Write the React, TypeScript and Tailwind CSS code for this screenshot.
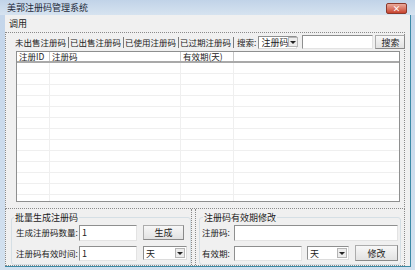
import React from 'react';

const font = { fontFamily: '"Noto Sans CJK SC", "Noto Sans", sans-serif' };

const TextBox: React.FC<{ value?: string; className?: string }> = ({ value = '', className = '' }) => (
  <div
    className={`shrink-0 bg-white border border-t-[#8e8f8f] border-l-[#8e8f8f] border-r-[#e3e3e3] border-b-[#e3e3e3] flex items-center pl-[2px] text-[9px] leading-none text-[#222] ${className}`}
  >
    {value}
  </div>
);

const Combo: React.FC<{ value: string; className?: string }> = ({ value, className = '' }) => (
  <div
    className={`shrink-0 bg-white border border-t-[#8e8f8f] border-l-[#8e8f8f] border-r-[#dcdcdc] border-b-[#dcdcdc] flex items-center justify-between pl-[2px] pr-[1px] text-[9px] leading-none text-[#222] whitespace-nowrap ${className}`}
  >
    <span>{value}</span>
    <span className="w-[10px] h-[10px] shrink-0 bg-[#ececec] border border-[#b5b5b5] flex items-center justify-center">
      <span className="w-0 h-0 border-l-[3px] border-r-[3px] border-t-[3px] border-l-transparent border-r-transparent border-t-[#222]" />
    </span>
  </div>
);

const Button: React.FC<{ label: string; className?: string }> = ({ label, className = '' }) => (
  <div
    className={`shrink-0 border border-[#acacac] border-b-[#8a8a8a] border-r-[#8a8a8a] bg-gradient-to-b from-[#f7f7f7] to-[#e2e2e2] flex items-center justify-center text-[9px] leading-none text-[#222] whitespace-nowrap ${className}`}
  >
    {label}
  </div>
);

const tabs = ['未出售注册码', '已出售注册码', '已使用注册码', '已过期注册码'];
const rows = Array.from({ length: 13 });

export default function App() {
  return (
    <div
      className="w-[415px] h-[270px] bg-gradient-to-b from-[#c3d5ea] to-[#d3e1ef] flex flex-col overflow-hidden text-[#222]"
      style={font}
    >
      {/* Title bar */}
      <div className="h-[16px] flex items-center justify-between pl-[7px] pr-[8px] bg-gradient-to-b from-[#c1d3e8] to-[#d6e3f0]">
        <span className="text-[9px] leading-none text-[#1e2a3a] whitespace-nowrap">美郭注册码管理系统</span>
        <div className="w-[21px] h-[11px] mt-[2px] rounded-[2px] bg-gradient-to-b from-[#e9a99b] to-[#c7422e] border border-[#8c3a2c] flex items-center justify-center text-white text-[8px] leading-none font-bold">
          ×
        </div>
      </div>

      {/* Client area */}
      <div className="flex-1 ml-[5px] mr-[4px] mb-[3px] bg-[#f0f0f0] border-r border-b border-[#3b8aa6] flex flex-col">
        {/* Menu */}
        <div className="h-[17px] flex items-center pl-[4px] text-[9px] leading-none">调用</div>

        {/* Tab section */}
        <div className="h-[177px] mr-[5px] border border-dotted border-[#8a8a8a] flex flex-col">
          <div className="h-[18px] flex items-center pl-[9px] text-[8.5px] leading-none whitespace-nowrap">
            {tabs.map((t) => (
              <React.Fragment key={t}>
                <span className="shrink-0">{t}</span>
                <span className="shrink-0 mx-[1.5px] w-px h-[11px] bg-[#7a7a7a]" />
              </React.Fragment>
            ))}
            <span className="shrink-0 ml-[2px]">搜索:</span>
            <Combo value="注册码" className="w-[39px] h-[13px] ml-[2px]" />
            <TextBox className="w-[71px] h-[14px] ml-[5px]" />
            <Button label="搜索" className="w-[30px] h-[14px] ml-[2px]" />
          </div>

          {/* List view */}
          <div className="ml-[10px] mr-[4px] h-[151px] bg-white border border-[#8e8f8f] flex flex-col overflow-hidden">
            <div className="h-[11px] shrink-0 flex border-b-2 border-[#a9a9a9] text-[8.5px] leading-none whitespace-nowrap">
              <div className="w-[33px] border-r border-[#c8c8c8] flex items-center pl-[2px]">注册ID</div>
              <div className="w-[131px] border-r border-[#c8c8c8] flex items-center pl-[2px]">注册码</div>
              <div className="w-[53px] border-r border-[#c8c8c8] flex items-center pl-[2px]">有效期(天)</div>
              <div className="flex-1" />
            </div>
            {rows.map((_, i) => (
              <div key={i} className="h-[11px] shrink-0 flex border-b border-[#efefef]">
                <div className="w-[33px] border-r border-[#efefef]" />
                <div className="w-[131px] border-r border-[#efefef]" />
                <div className="w-[53px] border-r border-[#efefef]" />
                <div className="flex-1" />
              </div>
            ))}
          </div>
        </div>

        {/* Bottom section */}
        <div className="flex-1 mr-[5px] border border-t-0 border-dotted border-[#8a8a8a] flex">
          <div className="w-[186px] border-r border-dotted border-[#8a8a8a] pl-[5px] pr-[4px]">
            <fieldset className="h-[52px] mt-[4px] border border-[#d5dfe5] rounded-[3px] pl-[4px] pr-[3px] pt-[1px]">
              <legend className="px-[1px] ml-[-2px] text-[9px] leading-none whitespace-nowrap">批量生成注册码</legend>
              <div className="flex items-center h-[17px] mt-[1px] whitespace-nowrap">
                <span className="w-[63px] shrink-0 text-[8.5px] leading-none">生成注册码数量:</span>
                <TextBox value="1" className="w-[58px] h-[16px]" />
                <Button label="生成" className="w-[41px] h-[15px] ml-[6px]" />
              </div>
              <div className="flex items-center h-[16px] mt-[4px] whitespace-nowrap">
                <span className="w-[63px] shrink-0 text-[8.5px] leading-none">注册码有效时间:</span>
                <TextBox value="1" className="w-[58px] h-[15px]" />
                <Combo value="天" className="w-[44px] h-[14px] ml-[6px]" />
              </div>
            </fieldset>
          </div>
          <div className="w-[6px] border-r border-dotted border-[#8a8a8a]" />
          <div className="flex-1 pl-[3px] pr-[3px]">
            <fieldset className="h-[52px] mt-[4px] border border-[#d5dfe5] rounded-[3px] pl-[2px] pr-[2px] pt-[1px]">
              <legend className="px-[1px] ml-[1px] text-[9px] leading-none whitespace-nowrap">注册码有效期修改</legend>
              <div className="flex items-center h-[17px] mt-[1px] whitespace-nowrap">
                <span className="w-[32px] shrink-0 text-[8.5px] leading-none">注册码:</span>
                <TextBox className="flex-1 h-[16px]" />
              </div>
              <div className="flex items-center h-[16px] mt-[4px] whitespace-nowrap">
                <span className="w-[32px] shrink-0 text-[8.5px] leading-none">有效期:</span>
                <TextBox className="w-[68px] h-[15px]" />
                <Combo value="天" className="w-[42px] h-[14px] ml-[5px]" />
                <Button label="修改" className="w-[43px] h-[16px] ml-[6px]" />
              </div>
            </fieldset>
          </div>
        </div>
      </div>
    </div>
  );
}
